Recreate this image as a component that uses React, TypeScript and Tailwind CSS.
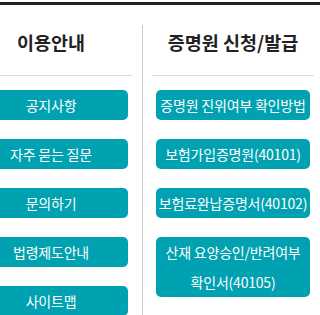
const font = { fontFamily: '"Noto Sans CJK KR", "Noto Sans", sans-serif' };

const guide = ["공지사항", "자주 묻는 질문", "문의하기", "법령제도안내", "사이트맵"];
const certs = [
  ["증명원 진위여부 확인방법"],
  ["보험가입증명원(40101)"],
  ["보험료완납증명서(40102)"],
  ["산재 요양승인/반려여부", "확인서(40105)"],
];

function Btn({ lines }: { lines: string[] }) {
  return (
    <a className="block rounded-[5px] bg-[#00a1b1] text-center text-[14px] leading-[30px] tracking-[-0.2px] whitespace-nowrap text-white">
      {lines.map((l) => (
        <div key={l}>{l}</div>
      ))}
    </a>
  );
}

function Column({ title, items }: { title: string; items: string[][] }) {
  return (
    <div className="w-[162px] shrink-0">
      <h2 className="h-[34px] text-center text-[18.5px] leading-[34px] font-bold text-[#222]">{title}</h2>
      <div className="mt-[16px] h-px bg-[#dcdcdc]" />
      <div className="mt-[14px] flex flex-col gap-[19px] px-[4px]">
        {items.map((lines) => (
          <Btn key={lines.join()} lines={lines} />
        ))}
      </div>
    </div>
  );
}

export default function App() {
  return (
    <div className="h-[315px] w-[320px] overflow-hidden bg-white" style={font}>
      <div className="mt-[2px] h-[3px] bg-[#222]" />
      <div className="mt-[20px] ml-[-30px] flex">
        <Column title="이용안내" items={guide.map((g) => [g])} />
        <div className="mx-[10px] min-h-[300px] w-px shrink-0 bg-[#cccccc]" />
        <div className="ml-[-1px]">
          <Column title="증명원 신청/발급" items={certs} />
        </div>
      </div>
    </div>
  );
}
